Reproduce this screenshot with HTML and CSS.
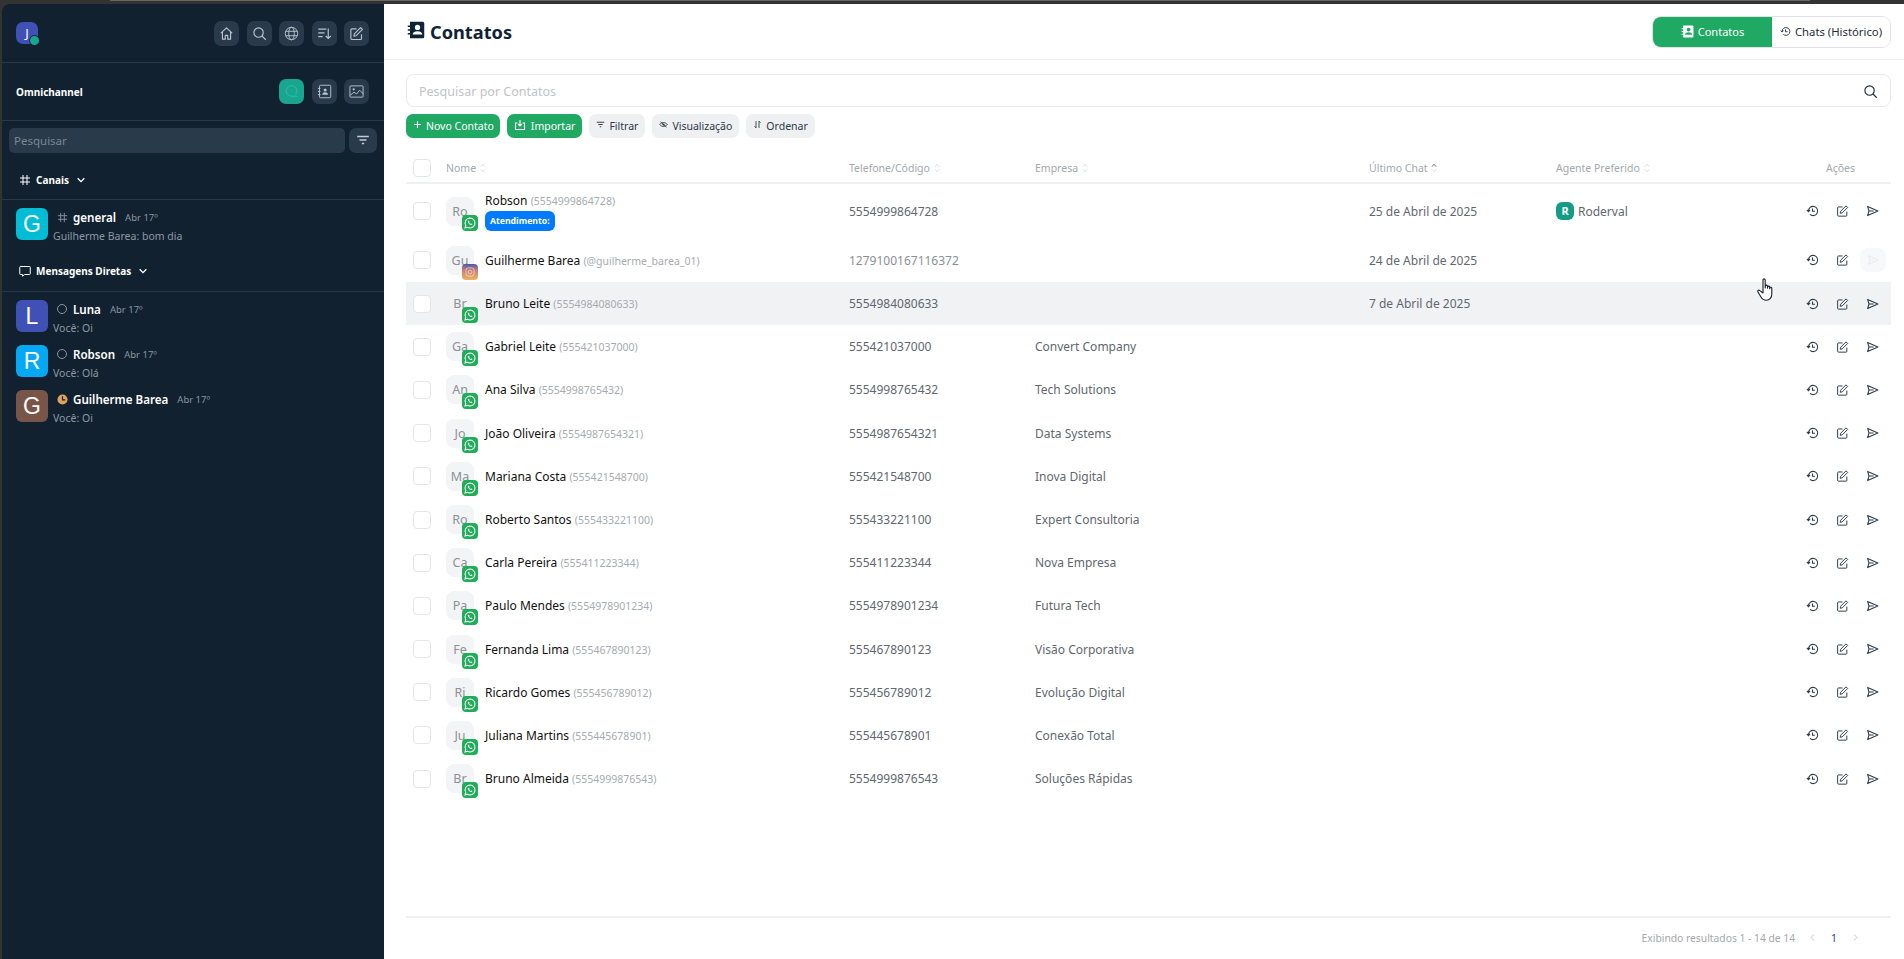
FILE: index.html
```html
<!DOCTYPE html>
<html lang="pt-BR">
<head>
    <meta charset="UTF-8">
    <title>Contatos</title>
    <link rel="stylesheet" href="styles.css">
</head>
<body>
    <svg class="sprite" width="0" height="0">
        <symbol id="i-home" viewBox="0 0 24 24"><path d="M3 11.5 12 3l9 8.5M5.5 9.5V21h4.5v-6h4v6h4.500V9.500" fill="none" stroke="currentColor" stroke-width="1.800" stroke-linejoin="round"/></symbol>
        <symbol id="i-search" viewBox="0 0 24 24"><circle cx="10.500" cy="10.500" r="7.500" fill="none" stroke="currentColor" stroke-width="1.800"/><path d="m16 16 6 6" stroke="currentColor" stroke-width="1.800"/></symbol>
        <symbol id="i-globe" viewBox="0 0 24 24"><g fill="none" stroke="currentColor" stroke-width="1.500"><circle cx="12" cy="12" r="10"/><ellipse cx="12" cy="12" rx="4.500" ry="10"/><path d="M3 8.500h18M3 15.500h18"/></g></symbol>
        <symbol id="i-sort" viewBox="0 0 24 24"><path d="M2 5h13M2 11h10M2 17h7M18 4v16m-4-4 4 4 4-4" fill="none" stroke="currentColor" stroke-width="1.800"/></symbol>
        <symbol id="i-edit" viewBox="0 0 24 24"><path d="M20 13v7a1.500 1.500 0 0 1-1.500 1.500h-14A1.500 1.500 0 0 1 3 20V6a1.500 1.500 0 0 1 1.500-1.500H12M8.500 12.500 18.500 2.500l3 3-10 10-3.700.700z" fill="none" stroke="currentColor" stroke-width="1.800" stroke-linejoin="round"/></symbol>
        <symbol id="i-book" viewBox="0 0 24 24"><g fill="none" stroke="currentColor" stroke-width="1.500"><rect x="4" y="2" width="18" height="20" rx="1.500"/><path d="M1.500 7h4M1.500 12h4M1.500 17h4"/></g><circle cx="13" cy="9.500" r="2.500" fill="currentColor"/><path d="M8.500 17c0-5 9-5 9 0z" fill="currentColor"/></symbol>
        <symbol id="i-book-fill" viewBox="0 0 24 24"><path d="M4 1h17a2 2 0 0 1 2 2v18a2 2 0 0 1-2 2H4V18H1v-2h3v-3H1v-2h3V8H1V6h3z" fill="currentColor"/><circle cx="14" cy="8.500" r="3.500" fill="var(--cut, #fff)"/><path d="M7.500 18c0-6 13-6 13 0z" fill="var(--cut, #fff)"/></symbol>
        <symbol id="i-image" viewBox="0 0 24 24"><rect x="1.500" y="3" width="21" height="18" rx="1" fill="none" stroke="currentColor" stroke-width="1.500"/><circle cx="7.500" cy="8.500" r="1.800" fill="currentColor"/><path d="m2 18 6-5 4 3 5-6 6 6" fill="none" stroke="currentColor" stroke-width="1.500"/></symbol>
        <symbol id="i-bubble" viewBox="0 0 24 24"><path d="M21 19.500h-9a8.500 8.500 0 1 1 8.500-8.500c0 2.500-.7 4-2.200 5.500" fill="none" stroke="currentColor" stroke-width="2.200"/></symbol>
        <symbol id="i-chat" viewBox="0 0 24 24"><path d="M3 3h18a1.500 1.500 0 0 1 1.500 1.500v13a1.500 1.500 0 0 1-1.500 1.500H11l-4 3.500V19H3a1.500 1.500 0 0 1-1.500-1.500v-13A1.500 1.500 0 0 1 3 3z" fill="none" stroke="currentColor" stroke-width="2"/></symbol>
        <symbol id="i-hash" viewBox="0 0 24 24"><path d="M8 2v20M16 2v20M2 8h20M2 16h20" fill="none" stroke="currentColor" stroke-width="2"/></symbol>
        <symbol id="i-chevron" viewBox="0 0 24 24"><path d="m4 8 8 8 8-8" fill="none" stroke="currentColor" stroke-width="3.200"/></symbol>
        <symbol id="i-filter" viewBox="0 0 24 24"><path d="M2 6h20M6 12h12M10 18h4" fill="none" stroke="currentColor" stroke-width="2.500"/></symbol>
        <symbol id="i-history" viewBox="0 0 24 24"><path d="M4.500 12a8.500 8.500 0 1 1 2.800 6.300M1.500 10l3 3.300 3-3.300" fill="none" stroke="currentColor" stroke-width="2"/><path d="M12 7.500V12.500h4.500" fill="none" stroke="currentColor" stroke-width="2"/></symbol>
        <symbol id="i-send" viewBox="0 0 24 24"><path d="M3 3.500 22 12 3 20.500 5.500 12zM5.500 12H14" fill="none" stroke="currentColor" stroke-width="2" stroke-linejoin="round"/></symbol>
        <symbol id="i-plus" viewBox="0 0 24 24"><path d="M12 3v18M3 12h18" stroke="currentColor" stroke-width="3"/></symbol>
        <symbol id="i-import" viewBox="0 0 24 24"><path d="M7 8H3v13h18V8h-4M12 2v12m-4-4 4 4 4-4" fill="none" stroke="currentColor" stroke-width="2.200"/></symbol>
        <symbol id="i-eye" viewBox="0 0 24 24"><path d="M2 12c5-7 15-7 20 0-5 7-15 7-20 0zM4 5l16 14" fill="none" stroke="currentColor" stroke-width="2.400"/><circle cx="12" cy="12" r="3" fill="currentColor"/></symbol>
        <symbol id="i-order" viewBox="0 0 24 24"><path d="M8 3v18m-4-4 4 4M16 21V3m4 4-4-4" fill="none" stroke="currentColor" stroke-width="2.400"/></symbol>
        <symbol id="i-updown" viewBox="0 0 12 16"><path d="m2.500 6 3.500-4 3.500 4M2.500 10l3.500 4 3.500-4" fill="none" stroke="currentColor" stroke-width="1"/></symbol>
        <symbol id="i-up" viewBox="0 0 12 16"><path d="m2.500 6 3.500-4 3.500 4" fill="none" stroke="#555" stroke-width="1.200"/><path d="m2.500 10 3.500 4 3.500-4" fill="none" stroke="#ccc" stroke-width="1"/></symbol>
        <symbol id="i-wa" viewBox="0 0 24 24"><path d="M12 3.500a8.500 8.500 0 0 0-7.300 12.800L3.500 20.500l4.300-1.100A8.500 8.500 0 1 0 12 3.500z" fill="none" stroke="#fff" stroke-width="1.800"/><path d="M9 8c-1 1-1 2.500.5 4.500s3.500 3.300 5 3c1-.2 1.500-1 1.500-1.800l-2-1-1 1c-1-.4-2-1.400-2.500-2.500l.8-1-1-2.200z" fill="#fff"/></symbol>
        <symbol id="i-ig" viewBox="0 0 24 24"><rect x="5" y="5" width="14" height="14" rx="4" fill="none" stroke="#fff" stroke-opacity=".6" stroke-width="1.500"/><circle cx="12" cy="12" r="3.200" fill="none" stroke="#fff" stroke-opacity=".6" stroke-width="1.500"/></symbol>
        <symbol id="i-clock" viewBox="0 0 24 24"><circle cx="12" cy="12" r="11" fill="#e0a458"/><path d="M12 5v8h6" fill="none" stroke="#122130" stroke-width="2.600"/></symbol>
    </svg>

    <div class="app">
        <!-- Sidebar -->
        <aside class="sidebar">
            <div class="side-top">
                <div class="logo">J<span class="logo-dot"></span></div>
                <div class="icon-group">
                    <button class="side-btn"><svg><use href="#i-home"/></svg></button>
                    <button class="side-btn"><svg><use href="#i-search"/></svg></button>
                    <button class="side-btn"><svg><use href="#i-globe"/></svg></button>
                    <button class="side-btn"><svg><use href="#i-sort"/></svg></button>
                    <button class="side-btn"><svg><use href="#i-edit"/></svg></button>
                </div>
            </div>
            <div class="side-omni">
                <strong>Omnichannel</strong>
                <div class="icon-group">
                    <button class="side-btn active"><svg><use href="#i-bubble"/></svg></button>
                    <button class="side-btn"><svg><use href="#i-book"/></svg></button>
                    <button class="side-btn"><svg><use href="#i-image"/></svg></button>
                </div>
            </div>
            <div class="side-search">
                <div class="side-input">Pesquisar</div>
                <button class="side-filter"><svg><use href="#i-filter"/></svg></button>
            </div>
            <div class="side-title title-canais"><svg class="t-icon"><use href="#i-hash"/></svg>Canais<svg class="t-chev"><use href="#i-chevron"/></svg></div>
            <div class="chat-list">
                <div class="chat-item">
                    <div class="chat-avatar cyan">G</div>
                    <div class="chat-text">
                        <div class="chat-name"><svg class="status hash"><use href="#i-hash"/></svg><b>general</b><span>Abr 17º</span></div>
                        <div class="chat-sub">Guilherme Barea: bom dia</div>
                    </div>
                </div>
            </div>
            <div class="side-title title-dm"><svg class="t-icon"><use href="#i-chat"/></svg>Mensagens Diretas<svg class="t-chev"><use href="#i-chevron"/></svg></div>
            <div class="chat-list">
                <div class="chat-item">
                    <div class="chat-avatar indigo">L</div>
                    <div class="chat-text">
                        <div class="chat-name"><i class="ring"></i><b>Luna</b><span>Abr 17º</span></div>
                        <div class="chat-sub">Você: Oi</div>
                    </div>
                </div>
                <div class="chat-item">
                    <div class="chat-avatar blue">R</div>
                    <div class="chat-text">
                        <div class="chat-name"><i class="ring"></i><b>Robson</b><span>Abr 17º</span></div>
                        <div class="chat-sub">Você: Olá</div>
                    </div>
                </div>
                <div class="chat-item">
                    <div class="chat-avatar brown">G</div>
                    <div class="chat-text">
                        <div class="chat-name"><svg class="status"><use href="#i-clock"/></svg><b>Guilherme Barea</b><span>Abr 17º</span></div>
                        <div class="chat-sub">Você: Oi</div>
                    </div>
                </div>
            </div>
        </aside>

        <!-- Main -->
        <main class="main">
            <header class="main-header">
                <h1><svg class="title-icon"><use href="#i-book-fill"/></svg>Contatos</h1>
                <div class="toggle">
                    <button class="toggle-on"><svg><use href="#i-book-fill"/></svg>Contatos</button>
                    <button class="toggle-off"><svg><use href="#i-history"/></svg>Chats (Histórico)</button>
                </div>
            </header>

            <div class="content">
                <div class="search-box">
                    <span>Pesquisar por Contatos</span>
                    <svg><use href="#i-search"/></svg>
                </div>
                <div class="actions-bar">
                    <button class="btn green"><svg><use href="#i-plus"/></svg>Novo Contato</button>
                    <button class="btn green btn-import"><svg><use href="#i-import"/></svg>Importar</button>
                    <button class="btn gray"><svg><use href="#i-filter"/></svg>Filtrar</button>
                    <button class="btn gray"><svg><use href="#i-eye"/></svg>Visualização</button>
                    <button class="btn gray"><svg><use href="#i-order"/></svg>Ordenar</button>
                </div>

                <div class="table">
                    <div class="row head">
                        <div><span class="check"></span></div>
                        <div>Nome <svg class="sort"><use href="#i-updown"/></svg></div>
                        <div>Telefone/Código <svg class="sort"><use href="#i-updown"/></svg></div>
                        <div>Empresa <svg class="sort"><use href="#i-updown"/></svg></div>
                        <div>Último Chat <svg class="sort"><use href="#i-up"/></svg></div>
                        <div>Agente Preferido <svg class="sort"><use href="#i-updown"/></svg></div>
                        <div class="head-actions">Ações</div>
                    </div>

                    <div class="row first">
                        <div><span class="check"></span></div>
                        <div class="who"><div class="avatar">Ro<span class="badge wa"><svg><use href="#i-wa"/></svg></span></div><div><div class="nm">Robson <small>(5554999864728)</small></div><span class="tag">Atendimento:</span></div></div>
                        <div>5554999864728</div>
                        <div></div>
                        <div>25 de Abril de 2025</div>
                        <div class="agent"><span class="agent-dot">R</span>Roderval</div>
                        <div class="acts"><svg><use href="#i-history"/></svg><svg><use href="#i-edit"/></svg><svg><use href="#i-send"/></svg></div>
                    </div>
                    <div class="row second">
                        <div><span class="check"></span></div>
                        <div class="who"><div class="avatar">Gu<span class="badge ig"><svg><use href="#i-ig"/></svg></span></div><div class="nm">Guilherme Barea <small>(@guilherme_barea_01)</small></div></div>
                        <div class="muted">1279100167116372</div>
                        <div></div>
                        <div>24 de Abril de 2025</div>
                        <div></div>
                        <div class="acts"><svg><use href="#i-history"/></svg><svg><use href="#i-edit"/></svg><svg class="off"><use href="#i-send"/></svg></div>
                    </div>
                    <div class="row hover">
                        <div><span class="check"></span></div>
                        <div class="who"><div class="avatar">Br<span class="badge wa"><svg><use href="#i-wa"/></svg></span></div><div class="nm">Bruno Leite <small>(5554984080633)</small></div></div>
                        <div>5554984080633</div>
                        <div></div>
                        <div>7 de Abril de 2025</div>
                        <div></div>
                        <div class="acts"><svg><use href="#i-history"/></svg><svg><use href="#i-edit"/></svg><svg><use href="#i-send"/></svg></div>
                    </div>
                    <div class="row">
                        <div><span class="check"></span></div>
                        <div class="who"><div class="avatar">Ga<span class="badge wa"><svg><use href="#i-wa"/></svg></span></div><div class="nm">Gabriel Leite <small>(555421037000)</small></div></div>
                        <div>555421037000</div>
                        <div>Convert Company</div>
                        <div></div>
                        <div></div>
                        <div class="acts"><svg><use href="#i-history"/></svg><svg><use href="#i-edit"/></svg><svg><use href="#i-send"/></svg></div>
                    </div>
                    <div class="row">
                        <div><span class="check"></span></div>
                        <div class="who"><div class="avatar">An<span class="badge wa"><svg><use href="#i-wa"/></svg></span></div><div class="nm">Ana Silva <small>(5554998765432)</small></div></div>
                        <div>5554998765432</div>
                        <div>Tech Solutions</div>
                        <div></div>
                        <div></div>
                        <div class="acts"><svg><use href="#i-history"/></svg><svg><use href="#i-edit"/></svg><svg><use href="#i-send"/></svg></div>
                    </div>
                    <div class="row">
                        <div><span class="check"></span></div>
                        <div class="who"><div class="avatar">Jo<span class="badge wa"><svg><use href="#i-wa"/></svg></span></div><div class="nm">João Oliveira <small>(5554987654321)</small></div></div>
                        <div>5554987654321</div>
                        <div>Data Systems</div>
                        <div></div>
                        <div></div>
                        <div class="acts"><svg><use href="#i-history"/></svg><svg><use href="#i-edit"/></svg><svg><use href="#i-send"/></svg></div>
                    </div>
                    <div class="row">
                        <div><span class="check"></span></div>
                        <div class="who"><div class="avatar">Ma<span class="badge wa"><svg><use href="#i-wa"/></svg></span></div><div class="nm">Mariana Costa <small>(555421548700)</small></div></div>
                        <div>555421548700</div>
                        <div>Inova Digital</div>
                        <div></div>
                        <div></div>
                        <div class="acts"><svg><use href="#i-history"/></svg><svg><use href="#i-edit"/></svg><svg><use href="#i-send"/></svg></div>
                    </div>
                    <div class="row">
                        <div><span class="check"></span></div>
                        <div class="who"><div class="avatar">Ro<span class="badge wa"><svg><use href="#i-wa"/></svg></span></div><div class="nm">Roberto Santos <small>(555433221100)</small></div></div>
                        <div>555433221100</div>
                        <div>Expert Consultoria</div>
                        <div></div>
                        <div></div>
                        <div class="acts"><svg><use href="#i-history"/></svg><svg><use href="#i-edit"/></svg><svg><use href="#i-send"/></svg></div>
                    </div>
                    <div class="row">
                        <div><span class="check"></span></div>
                        <div class="who"><div class="avatar">Ca<span class="badge wa"><svg><use href="#i-wa"/></svg></span></div><div class="nm">Carla Pereira <small>(555411223344)</small></div></div>
                        <div>555411223344</div>
                        <div>Nova Empresa</div>
                        <div></div>
                        <div></div>
                        <div class="acts"><svg><use href="#i-history"/></svg><svg><use href="#i-edit"/></svg><svg><use href="#i-send"/></svg></div>
                    </div>
                    <div class="row">
                        <div><span class="check"></span></div>
                        <div class="who"><div class="avatar">Pa<span class="badge wa"><svg><use href="#i-wa"/></svg></span></div><div class="nm">Paulo Mendes <small>(5554978901234)</small></div></div>
                        <div>5554978901234</div>
                        <div>Futura Tech</div>
                        <div></div>
                        <div></div>
                        <div class="acts"><svg><use href="#i-history"/></svg><svg><use href="#i-edit"/></svg><svg><use href="#i-send"/></svg></div>
                    </div>
                    <div class="row">
                        <div><span class="check"></span></div>
                        <div class="who"><div class="avatar">Fe<span class="badge wa"><svg><use href="#i-wa"/></svg></span></div><div class="nm">Fernanda Lima <small>(555467890123)</small></div></div>
                        <div>555467890123</div>
                        <div>Visão Corporativa</div>
                        <div></div>
                        <div></div>
                        <div class="acts"><svg><use href="#i-history"/></svg><svg><use href="#i-edit"/></svg><svg><use href="#i-send"/></svg></div>
                    </div>
                    <div class="row">
                        <div><span class="check"></span></div>
                        <div class="who"><div class="avatar">Ri<span class="badge wa"><svg><use href="#i-wa"/></svg></span></div><div class="nm">Ricardo Gomes <small>(555456789012)</small></div></div>
                        <div>555456789012</div>
                        <div>Evolução Digital</div>
                        <div></div>
                        <div></div>
                        <div class="acts"><svg><use href="#i-history"/></svg><svg><use href="#i-edit"/></svg><svg><use href="#i-send"/></svg></div>
                    </div>
                    <div class="row">
                        <div><span class="check"></span></div>
                        <div class="who"><div class="avatar">Ju<span class="badge wa"><svg><use href="#i-wa"/></svg></span></div><div class="nm">Juliana Martins <small>(555445678901)</small></div></div>
                        <div>555445678901</div>
                        <div>Conexão Total</div>
                        <div></div>
                        <div></div>
                        <div class="acts"><svg><use href="#i-history"/></svg><svg><use href="#i-edit"/></svg><svg><use href="#i-send"/></svg></div>
                    </div>
                    <div class="row">
                        <div><span class="check"></span></div>
                        <div class="who"><div class="avatar">Br<span class="badge wa"><svg><use href="#i-wa"/></svg></span></div><div class="nm">Bruno Almeida <small>(5554999876543)</small></div></div>
                        <div>5554999876543</div>
                        <div>Soluções Rápidas</div>
                        <div></div>
                        <div></div>
                        <div class="acts"><svg><use href="#i-history"/></svg><svg><use href="#i-edit"/></svg><svg><use href="#i-send"/></svg></div>
                    </div>
                </div>

                <footer class="pager">
                    <span>Exibindo resultados 1 - 14 de 14</span>
                    <svg class="pg-arrow"><use href="#i-chevron"/></svg>
                    <b>1</b>
                    <svg class="pg-arrow next"><use href="#i-chevron"/></svg>
                </footer>
            </div>
        </main>
    </div>

    <!-- mouse pointer captured in the screenshot -->
    <svg class="cursor" viewBox="0 0 20 26"><path d="M6 2c0-1.500 2.200-1.500 2.200 0v8l.2-2c.2-1.300 2.100-1.100 2.100.2v2l.2-1.300c.2-1.200 2-1 2 .2v1.600l.3-.8c.3-1 1.800-.8 1.800.4v6c0 3-2 6-5.500 6-3.200 0-4.500-1.800-5.500-3.500L1 14c-.8-1.300.8-2.500 1.800-1.400L6 15z" fill="#fff" stroke="#15202b" stroke-width="1.100" stroke-linejoin="round"/></svg>
</body>
</html>
```

FILE: styles.css
```css
* {
    box-sizing: border-box;
}
html, body {
    margin: 0;
    height: 100%;
    overflow: hidden;
}
body {
    font-family: "Noto Sans", "Open Sans", sans-serif;
    background: linear-gradient(90deg, #333 110px, #666 110px, #666 1810px, #333 1810px) top / 100% 1px no-repeat, #333;
    color: #1f2d3d;
    padding-top: 4px;
    position: relative;
}
button {
    font: inherit;
    border: none;
    cursor: pointer;
}
.sprite {
    position: absolute;
}
.app {
    display: flex;
    height: 955px;
    padding-left: 2px;
}

/* Sidebar */
.sidebar {
    width: 382px;
    background-color: #122130;
    border-top-left-radius: 8px;
    color: #fff;
    flex-shrink: 0;
}
.side-top {
    height: 59px;
    display: flex;
    align-items: center;
    justify-content: space-between;
    padding: 0 15px 0 14px;
    border-bottom: 1px solid #26394a;
}
.logo {
    width: 22px;
    height: 22px;
    background-color: #3f51b5;
    border-radius: 7px;
    font-size: 13px;
    line-height: 22px;
    text-align: center;
    position: relative;
}
.logo-dot {
    position: absolute;
    right: -2px;
    bottom: -2px;
    width: 11px;
    height: 11px;
    border-radius: 50%;
    background-color: #1aa58f;
    border: 1px solid #122130;
}
.icon-group {
    display: flex;
    gap: 7.500px;
}
.side-btn {
    width: 25px;
    height: 25px;
    background-color: #293a4b;
    border-radius: 7px;
    color: #b8c4d0;
    padding: 5px;
    display: flex;
}
.side-btn svg {
    width: 15px;
    height: 15px;
}
.side-btn.active {
    background-color: #1aa58f;
    color: #22bba3;
}
.side-omni {
    height: 58px;
    display: flex;
    align-items: center;
    justify-content: space-between;
    padding: 0 15px 0 14px;
    border-bottom: 1px solid #26394a;
    font-size: 10px;
}
.side-search {
    display: flex;
    gap: 4px;
    padding: 7px 7px 0 7px;
}
.side-input {
    flex: 1;
    height: 25px;
    background-color: #293a4b;
    border-radius: 5px;
    color: #7b8794;
    font-size: 11.500px;
    line-height: 25px;
    padding-left: 5px;
}
.side-filter {
    width: 28px;
    height: 25px;
    background-color: #293a4b;
    border-radius: 7px;
    color: #c4ccd4;
    padding: 5px 7px;
    display: flex;
}
.side-filter svg {
    width: 14px;
    height: 14px;
}
.side-title {
    display: flex;
    align-items: center;
    font-size: 10px;
    font-weight: 700;
    padding-left: 17px;
    border-bottom: 1px solid #26394a;
}
.title-canais {
    height: 47px;
    padding-top: 7px;
}
.title-dm {
    height: 39px;
    padding-bottom: 3px;
}
.t-icon {
    width: 12px;
    height: 12px;
    margin-right: 5px;
}
.t-chev {
    width: 10px;
    height: 10px;
    margin-left: 7px;
}
.chat-list {
    padding: 8px 14px 0;
}
.chat-item {
    display: flex;
    gap: 5px;
    height: 45px;
}
.chat-avatar {
    width: 32px;
    height: 32px;
    border-radius: 6px;
    font-family: "Liberation Sans", Arial, sans-serif;
    font-size: 23px;
    line-height: 32px;
    text-align: center;
    flex-shrink: 0;
}
.cyan { background-color: #00bcd4; }
.indigo { background-color: #3f51b5; }
.blue { background-color: #03a9f4; }
.brown { background-color: #795548; }
.chat-text {
    padding-top: 1px;
}
.chat-name {
    display: flex;
    align-items: center;
    height: 16px;
    padding-left: 4px;
    font-size: 11.600px;
}
.chat-name b {
    font-weight: 600;
}
.chat-name span {
    font-size: 9.500px;
    color: #8a95a1;
    margin-left: 9px;
}
.status {
    width: 11px;
    height: 11px;
    color: #8a95a1;
    margin-right: 5px;
}
.status.hash {
    margin-left: 0;
}
.ring {
    width: 10px;
    height: 10px;
    border: 1.500px solid #8a95a1;
    border-radius: 50%;
    margin: 0 6px 0 0;
}
.chat-sub {
    font-size: 10.500px;
    color: #8d98a4;
    margin-top: 3px;
    line-height: 16px;
}

/* Main */
.main {
    flex: 1;
    background-color: #fff;
    display: flex;
    flex-direction: column;
}
.main-header {
    height: 56px;
    border-bottom: 1px solid #eceef0;
    display: flex;
    align-items: center;
    justify-content: space-between;
    padding: 0 13px 0 23px;
}
.main-header h1 {
    margin: 0;
    font-size: 18.200px;
    font-weight: 700;
    color: #0f2236;
    display: flex;
    align-items: center;
}
.title-icon {
    width: 18px;
    height: 18px;
    margin-right: 5px;
    margin-top: -4px;
}
.toggle {
    display: flex;
    width: 239px;
    height: 32px;
    border: 1px solid #dfe3e7;
    border-radius: 9px;
    overflow: hidden;
    font-size: 11px;
    white-space: nowrap;
}
.toggle button {
    display: flex;
    align-items: center;
    justify-content: center;
    gap: 4px;
    padding: 0;
}
.toggle-on {
    width: 119px;
    background-color: #20a963;
    color: #fff;
    --cut: #20a963;
}
.toggle-off {
    flex: 1;
    background-color: #fff;
    color: #1f2d3d;
    font-size: 11.300px;
}
.toggle svg {
    width: 13px;
    height: 13px;
}
.toggle-off svg {
    width: 11px;
    height: 11px;
}
.content {
    flex: 1;
    padding: 14px 13px 0 22px;
    display: flex;
    flex-direction: column;
}
.search-box {
    height: 33px;
    border: 1px solid #e8eaed;
    border-radius: 8px;
    display: flex;
    align-items: center;
    justify-content: space-between;
    padding: 2px 12px 0;
    font-size: 12.500px;
    color: #c0c4c9;
}
.search-box svg {
    width: 15px;
    height: 15px;
    color: #1f2d3d;
}
.actions-bar {
    display: flex;
    gap: 7px;
    margin-top: 7px;
}
.btn {
    height: 24px;
    border-radius: 7px;
    font-size: 10.500px;
    display: flex;
    align-items: center;
    gap: 4px;
    padding: 0 6px 0 7px;
}
.btn svg {
    width: 9px;
    height: 9px;
    margin-top: -3px;
}
.btn.green {
    background-color: #20a963;
    color: #fff;
}
.btn.gray {
    background-color: #eff0f2;
    color: #2b3947;
    padding: 0 7px;
}
.btn.btn-import {
    gap: 5px;
    padding: 0 7px;
}
.btn.btn-import svg {
    width: 12px;
    height: 12px;
}

/* Table */
.table {
    flex: 1;
    margin-top: 16px;
    font-size: 12px;
    color: #5f6770;
}
.row {
    display: grid;
    grid-template-columns: 40px 403px 186px 334px 187px 250px 85px;
    align-items: center;
    height: 43.200px;
}
.row.head {
    height: 30px;
    font-size: 10.500px;
    color: #a3a8ae;
    border-bottom: 2px solid #eef0f2;
}
.row.first {
    height: 54px;
}
.row.second {
    height: 44px;
}
.row.hover {
    background-color: #f1f2f4;
}
.muted {
    color: #8b9096;
}
.sort {
    width: 8px;
    height: 10px;
    color: #c8ccd0;
    vertical-align: -1px;
}
.head-actions {
    text-align: right;
    padding-right: 36px;
}
.check {
    display: block;
    width: 18px;
    height: 18px;
    margin-left: 7px;
    border: 1px solid #e3e5e8;
    border-radius: 4px;
    background-color: #fff;
}
.who {
    display: flex;
    align-items: center;
    gap: 11px;
}
.avatar {
    width: 28px;
    height: 29px;
    border-radius: 8px;
    background-color: #f3f4f6;
    color: #8b9096;
    font-size: 12.500px;
    line-height: 29px;
    text-align: center;
    position: relative;
    flex-shrink: 0;
}
.hover .avatar {
    background-color: #f1f2f4;
}
.badge {
    position: absolute;
    left: 16px;
    top: 18px;
    width: 16px;
    height: 16px;
    border-radius: 4px;
    display: flex;
    padding: 1px;
}
.badge svg {
    width: 14px;
    height: 14px;
}
.badge.wa {
    background-color: #1fae57;
}
.badge.ig {
    background: linear-gradient(#3f5bb5 0, #c47a73 35%, #eeb35f 100%);
}
.nm {
    font-size: 12px;
    color: #111;
}
.nm small {
    font-size: 10.500px;
    color: #a6abb1;
    margin-left: 0;
}
.tag {
    display: inline-block;
    background-color: #007bff;
    color: #fff;
    font-size: 8.700px;
    font-weight: 700;
    height: 20px;
    line-height: 20px;
    padding: 0 5px;
    border-radius: 6px;
    margin-top: 2px;
}
.agent {
    display: flex;
    align-items: center;
    gap: 4px;
}
.agent-dot {
    width: 18px;
    height: 18px;
    border-radius: 6px;
    background-color: #139d86;
    color: #fff;
    font-size: 11px;
    font-weight: 700;
    line-height: 18px;
    text-align: center;
}
.acts {
    display: flex;
    gap: 17px;
    justify-content: flex-end;
    align-items: center;
    padding-right: 12px;
    color: #2d3b4b;
}
.acts svg {
    width: 14px;
    height: 14px;
}
.acts svg.off {
    color: #e9ebee;
    background-color: #f7f8f9;
    border-radius: 8px;
    width: 27px;
    height: 24px;
    padding: 5px 7px;
    margin: 0 -7px 0 -6px;
}

/* Footer */
.pager {
    height: 43px;
    border-top: 2px solid #eef0f2;
    display: flex;
    align-items: center;
    justify-content: flex-end;
    gap: 13px;
    padding: 0 31px 2px 0;
    font-size: 10.300px;
    color: #a3a8ae;
}
.pager b {
    font-weight: 400;
    color: #24408e;
    margin: 0 1px;
}
.pg-arrow {
    width: 9px;
    height: 9px;
    color: #dcdfe2;
    transform: rotate(90deg);
}
.pg-arrow.next {
    transform: rotate(-90deg);
}

/* captured pointer */
.cursor {
    position: absolute;
    left: 1757px;
    top: 278px;
    width: 20px;
    height: 26px;
}
```
